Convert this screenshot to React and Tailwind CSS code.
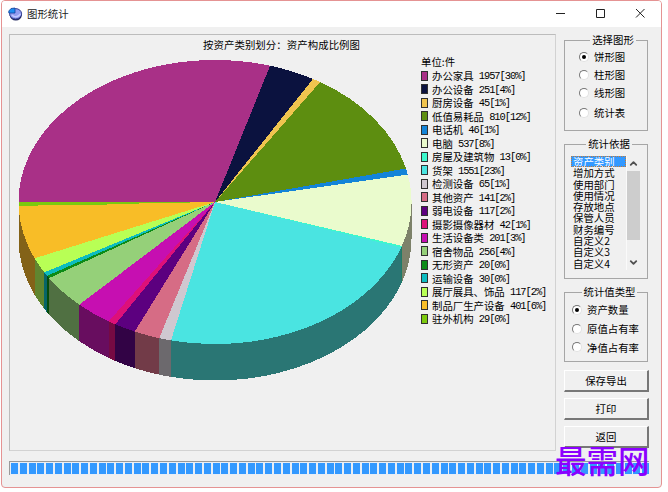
import { ChevronDown, ChevronUp } from "lucide-react";

const SLICES = [
  { name: "办公家具", value: 1957, pct: 30, color: "#a93087", side: "#551844" },
  { name: "办公设备", value: 251, pct: 4, color: "#0b123f", side: "#060920" },
  { name: "厨房设备", value: 45, pct: 1, color: "#f0c44f", side: "#786228" },
  { name: "低值易耗品", value: 810, pct: 12, color: "#5d8e10", side: "#2f4708" },
  { name: "电话机", value: 46, pct: 1, color: "#1384d8", side: "#0a426c" },
  { name: "电脑", value: 537, pct: 8, color: "#eafbcd", side: "#7d816a" },
  { name: "房屋及建筑物", value: 13, pct: 0, color: "#3cf8cc", side: "#1e7c66" },
  { name: "货架", value: 1551, pct: 23, color: "#4ae4e1", side: "#2a7674" },
  { name: "检测设备", value: 65, pct: 1, color: "#cfc8d0", side: "#6c696d" },
  { name: "其他资产", value: 141, pct: 2, color: "#d66c85", side: "#723b48" },
  { name: "弱电设备", value: 117, pct: 2, color: "#5c007f", side: "#320345" },
  { name: "摄影摄像器材", value: 42, pct: 1, color: "#dd1079", side: "#760a43" },
  { name: "生活设备类", value: 201, pct: 3, color: "#c60fb1", side: "#680d5f" },
  { name: "宿舍物品", value: 256, pct: 4, color: "#95d079", side: "#507042" },
  { name: "无形资产", value: 20, pct: 0, color: "#0d8b17", side: "#064c0c" },
  { name: "运输设备", value: 30, pct: 0, color: "#0dbcc0", side: "#076569" },
  { name: "展厅展具、饰品", value: 117, pct: 2, color: "#b8ff55", side: "#608530" },
  { name: "制品厂生产设备", value: 401, pct: 6, color: "#f8bd27", side: "#836218" },
  { name: "驻外机构", value: 29, pct: 0, color: "#7cc90e", side: "#436c08" },
];

const FIELDS = [
  "资产类别", "增加方式", "使用部门", "使用情况", "存放地点",
  "保管人员", "财务编号", "自定义2", "自定义3", "自定义4",
];

// geometry of the pie, in svg units
const CX = 205;
const CY = 167;
const RX = 196.5;
const RY = 142;
const DEPTH = 36.5;

const total = SLICES.reduce((sum, s) => sum + s.value, 0);

// slices run clockwise, starting from the left end
const point = (t) => [
  CX - RX * Math.cos(t * 2 * Math.PI),
  CY - RY * Math.sin(t * 2 * Math.PI),
];

const Pie = () => {
  let acc = 0;
  const parts = SLICES.map((s) => {
    const from = acc / total;
    acc += s.value;
    return { ...s, from, to: acc / total };
  });

  return (
    <svg width="410" height="358" viewBox="0 0 410 358" className="block" shapeRendering="crispEdges">
      {parts
        .filter((p) => p.to > 0.5)
        .map((p) => {
          const [x1, y1] = point(Math.max(p.from, 0.5));
          const [x2, y2] = point(p.to);
          return (
            <path
              key={p.name}
              fill={p.side}
              d={`M${x1} ${y1}A${RX} ${RY} 0 0 1 ${x2} ${y2}V${y2 + DEPTH}A${RX} ${RY} 0 0 0 ${x1} ${y1 + DEPTH}Z`}
            />
          );
        })}
      {parts.map((p) => {
        const [x1, y1] = point(p.from);
        const [x2, y2] = point(p.to);
        return (
          <path
            key={p.name}
            fill={p.color}
            d={`M${CX} ${CY}L${x1} ${y1}A${RX} ${RY} 0 0 1 ${x2} ${y2}Z`}
          />
        );
      })}
      <path d="M9 168.500L100 168" stroke="#7cc90e" strokeWidth="3" />
    </svg>
  );
};

const Legend = () => (
  <div className="w-[135px] shrink-0 pt-[20px] whitespace-nowrap">
    <div className="h-[14px] leading-[14px]">单位:件</div>
    {SLICES.map((s) => (
      <div key={s.name} className="flex h-[13.5px] items-center leading-[13.5px]">
        <span
          className="mr-[4px] h-[10px] w-[7px] shrink-0 border border-[#303030]"
          style={{ backgroundColor: s.color }}
        />
        <span>{s.name}</span>
        <span className="pt-[2px] font-['Liberation_Mono',monospace] tracking-[-1.04px] whitespace-pre">
          {` ${s.value}[${s.pct}%]`}
        </span>
      </div>
    ))}
  </div>
);

const Group = ({ title, className, children }) => (
  <fieldset className={`w-[84px] min-w-0 border border-[#a6a6a6] ${className}`}>
    <legend className="mx-auto h-[12px] px-[2px] leading-[11px]">{title}</legend>
    {children}
  </fieldset>
);

const Radio = ({ label, checked }) => (
  <div className="flex h-[18px] items-center gap-[5px]">
    <span className="flex size-[10px] items-center justify-center rounded-full border border-t-[#777] border-r-[#e2e2e2] border-b-[#e2e2e2] border-l-[#777] bg-white">
      {checked && <span className="size-[4px] rounded-full bg-black" />}
    </span>
    <span>{label}</span>
  </div>
);

const Button = ({ children, className = "" }) => (
  <button
    className={`block h-[22px] w-[85px] border-t border-r-2 border-b-2 border-l border-t-white border-r-[#777] border-b-[#777] border-l-white bg-[#f0f0f0] pb-px leading-[17px] ${className}`}
  >
    {children}
  </button>
);

const AppIcon = () => (
  <svg width="15" height="14" viewBox="0 0 15 14">
    <ellipse cx="7.8" cy="8.2" rx="6" ry="5.2" fill="#20265c" />
    <ellipse cx="7.6" cy="6.8" rx="6" ry="5.2" fill="#929cf0" stroke="#343f91" strokeWidth="1" />
    <path d="M4 8Q8 12 12.5 7" fill="none" stroke="#c1c8ff" strokeWidth="1.5" />
    <path d="M7 6V1L3 1.500L.8 4V6Z" fill="#1d8df0" stroke="#123f99" strokeWidth=".8" />
  </svg>
);

const TitleBar = () => (
  <div className="flex h-[26px] items-center bg-white pl-[6px]">
    <AppIcon />
    <span className="ml-[4px] flex-1 text-[#222]">图形统计</span>
    <svg width="109" height="26" viewBox="0 0 109 26" fill="none" stroke="#222" strokeWidth="1">
      <path d="M4 12.500h9" />
      <path d="M44.500 8.500h8v8h-8z" />
      <path d="M84 8l8.500 8.500M92.500 8l-8.500 8.500" />
    </svg>
  </div>
);

const Progress = () => (
  <div className="mt-[10px] ml-[7px] flex h-[14px] w-[640px] gap-[1.77px] overflow-hidden border-t border-l border-t-[#999] border-l-[#999] bg-[#e9eef5] py-[1px] pl-px">
    {Array.from({ length: 73 }, (_, i) => (
      <span key={i} className="w-[7px] shrink-0 bg-[#3399ff]" />
    ))}
  </div>
);

export default function App() {
  return (
    <div className="relative h-[492px] w-[668px] overflow-hidden bg-white pl-px font-['Noto_Sans_CJK_SC',sans-serif] text-[10.4px] text-black">
      <div className="h-[488px] w-[661px] overflow-hidden rounded-[4px] border border-[#e59393] bg-[#f0f0f0]">
        <TitleBar />
        <div className="flex pt-[7px] pl-[7px]">
          <div className="flex h-[417px] w-[547px] border border-t-[#bcbcbc] border-r-[#d2d2d2] border-b-[#d2d2d2] border-l-[#bcbcbc]">
            <div className="w-[411px] shrink-0">
              <div className="h-[21px] pl-[193px] leading-[19px] tracking-[0.08px] whitespace-nowrap">
                按资产类别划分：资产构成比例图
              </div>
              <div className="-mt-[21px]">
                <Pie />
              </div>
            </div>
            <Legend />
          </div>

          <div className="ml-[8px] flex w-[85px] flex-col">
            <Group title="选择图形" className="h-[97px] pl-[14px]">
              <div className="pt-[2px]">
                <Radio label="饼形图" checked />
                <Radio label="柱形图" />
                <Radio label="线形图" />
                <div className="pt-[2px]">
                  <Radio label="统计表" />
                </div>
              </div>
            </Group>

            <Group title="统计依据" className="mt-[7px] h-[141px] pl-[6px]">
              <div className="mt-[6px] flex h-[114px]">
                <div className="w-[55px]">
                  {FIELDS.map((f, i) => (
                    <div
                      key={f}
                      className={`h-[11.3px] pl-[2px] leading-[11px] ${
                        i === 0 ? "bg-[#3399ff] text-white outline-1 -outline-offset-1 outline-dotted outline-[#c47a37]" : ""
                      }`}
                    >
                      {f}
                    </div>
                  ))}
                </div>
                <div className="flex w-[14px] flex-col items-center border-l border-[#fafafa]">
                  <ChevronUp className="mt-[2px] size-[11px] text-[#505050]" strokeWidth={4} />
                  <div className="mt-[2px] h-[69px] w-full bg-[#cdcdcd]" />
                  <ChevronDown className="mt-auto mb-[2px] size-[11px] text-[#505050]" strokeWidth={4} />
                </div>
              </div>
            </Group>

            <Group title="统计值类型" className="mt-[7px] h-[76px] pl-[7px]">
              <div className="flex flex-col gap-[0.7px] pt-[3px]">
                <Radio label="资产数量" checked />
                <Radio label="原值占有率" />
                <Radio label="净值占有率" />
              </div>
            </Group>

            <div className="mt-[8px] flex flex-col gap-[6px]">
              <Button>保存导出</Button>
              <Button>打印</Button>
              <Button>返回</Button>
            </div>
          </div>
        </div>
        <Progress />
      </div>
      <div className="absolute top-[442px] left-[555px] text-[31.5px] leading-[34px] font-medium whitespace-nowrap text-[#8b00ff]">
        最需网
      </div>
    </div>
  );
}
